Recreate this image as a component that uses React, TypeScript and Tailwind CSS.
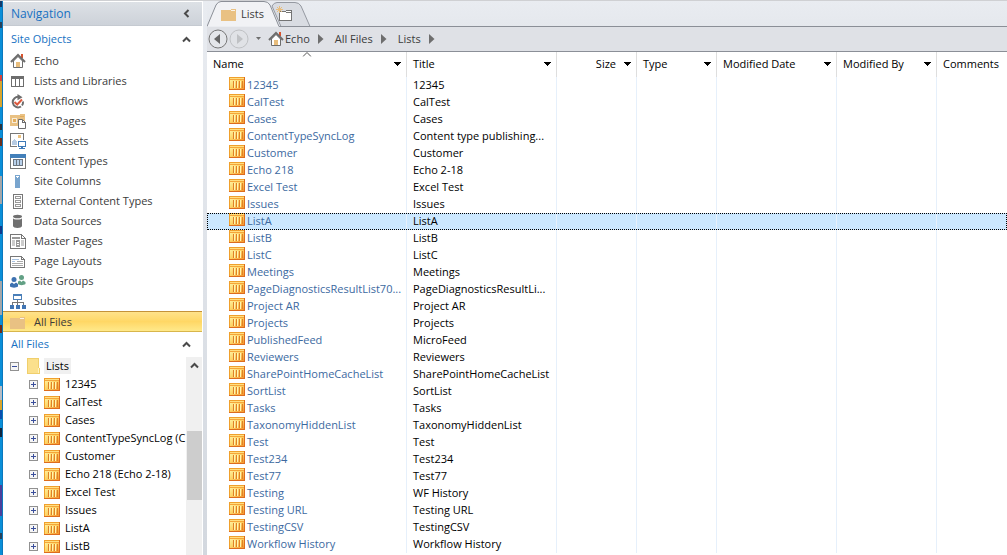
import { useState } from 'react';
import type { ReactNode } from 'react';

type FileRow = { name: string; title: string };

const files: FileRow[] = [
  { name: '12345', title: '12345' },
  { name: 'CalTest', title: 'CalTest' },
  { name: 'Cases', title: 'Cases' },
  { name: 'ContentTypeSyncLog', title: 'Content type publishing...' },
  { name: 'Customer', title: 'Customer' },
  { name: 'Echo 218', title: 'Echo 2-18' },
  { name: 'Excel Test', title: 'Excel Test' },
  { name: 'Issues', title: 'Issues' },
  { name: 'ListA', title: 'ListA' },
  { name: 'ListB', title: 'ListB' },
  { name: 'ListC', title: 'ListC' },
  { name: 'Meetings', title: 'Meetings' },
  { name: 'PageDiagnosticsResultList70...', title: 'PageDiagnosticsResultLi...' },
  { name: 'Project AR', title: 'Project AR' },
  { name: 'Projects', title: 'Projects' },
  { name: 'PublishedFeed', title: 'MicroFeed' },
  { name: 'Reviewers', title: 'Reviewers' },
  { name: 'SharePointHomeCacheList', title: 'SharePointHomeCacheList' },
  { name: 'SortList', title: 'SortList' },
  { name: 'Tasks', title: 'Tasks' },
  { name: 'TaxonomyHiddenList', title: 'TaxonomyHiddenList' },
  { name: 'Test', title: 'Test' },
  { name: 'Test234', title: 'Test234' },
  { name: 'Test77', title: 'Test77' },
  { name: 'Testing', title: 'WF History' },
  { name: 'Testing URL', title: 'Testing URL' },
  { name: 'TestingCSV', title: 'TestingCSV' },
  { name: 'Workflow History', title: 'Workflow History' },
];

const treeItems = [
  '12345',
  'CalTest',
  'Cases',
  'ContentTypeSyncLog (C',
  'Customer',
  'Echo 218 (Echo 2-18)',
  'Excel Test',
  'Issues',
  'ListA',
  'ListB',
];

const columns = [
  { label: 'Name', width: 'w-[200px]' },
  { label: 'Title', width: 'w-[150px]' },
  { label: 'Size', width: 'w-[80px]', right: true },
  { label: 'Type', width: 'w-[80px]' },
  { label: 'Modified Date', width: 'w-[120px]' },
  { label: 'Modified By', width: 'w-[100px]' },
  { label: 'Comments', width: '' },
];

function Icon({ children }: { children: ReactNode }) {
  return (
    <svg width="16" height="16" viewBox="0 0 16 16" className="shrink-0" shapeRendering="crispEdges" aria-hidden="true">
      {children}
    </svg>
  );
}

function HomeIcon() {
  return (
    <svg width="16" height="16" viewBox="0 0 16 16" className="shrink-0" aria-hidden="true">
      <path d="M11 1h2v4h-2z" fill="#d9532c" />
      <path d="M3.5 8v6.5h9V8L8 3.5z" fill="#fff" stroke="#6d6d6d" />
      <path d="M1 9l7-7 7 7" fill="none" stroke="#6d6d6d" strokeWidth="2" />
      <path d="M6 9h4v5H6z" fill="#e8bd7c" />
    </svg>
  );
}

function FolderIcon() {
  return (
    <Icon>
      <path d="M0 4h9l1-1h5v12H0z" fill="#e9c183" />
      <path d="M10 4h4v1h-4z" fill="#fff" opacity=".8" />
    </Icon>
  );
}

// orange list tile, shared by the tree and the table
function ListIcon() {
  return (
    <svg width="16" height="13" viewBox="0 0 16 13" className="shrink-0" shapeRendering="crispEdges" aria-hidden="true">
      <defs>
        <linearGradient id="tile" x1="0" y1="0" x2="1" y2="1">
          <stop offset="0" stopColor="#fff6a8" />
          <stop offset=".5" stopColor="#fdd264" />
          <stop offset="1" stopColor="#f5952c" />
        </linearGradient>
      </defs>
      <path d="M0 0h16v13H0z" fill="#f0a02c" />
      <path d="M15 0h1v13H0v-1h15z" fill="#dd6c1e" />
      <path d="M1 1h14v11H1z" fill="url(#tile)" />
      <path d="M1 1h14v1H1z" fill="#ffdf80" />
      <path d="M1 2h14v1H1z" fill="#f5a53a" />
      <path d="M4 4h1v7H4zM7 4h1v7H7zM10 4h1v7h-1zM13 4h1v7h-1z" fill="#df8228" />
      <path d="M5 4h1v7H5zM8 4h1v7H8zM11 4h1v7h-1z" fill="#fff4b0" />
    </svg>
  );
}

const navItems: { label: string; icon: ReactNode }[] = [
  { label: 'Echo', icon: <HomeIcon /> },
  {
    label: 'Lists and Libraries',
    icon: (
      <Icon>
        <path d="M1 3h13v11H1z" fill="#6d6d6d" />
        <path d="M2 6h3v7H2zM6 6h3v7H6zM10 6h3v7h-3z" fill="#fff" />
      </Icon>
    ),
  },
  {
    label: 'Workflows',
    icon: (
      <svg width="16" height="16" viewBox="0 0 16 16" className="shrink-0" aria-hidden="true">
        <path d="M11 13.5A5.3 5.3 0 1 1 9.5 4" fill="none" stroke="#6d6d6d" strokeWidth="2" />
        <path d="M13 8.5a5.5 5.5 0 0 1-1 4" fill="none" stroke="#6d6d6d" strokeWidth="2" />
        <path d="M7.5 1l5 3.2-5 3z" fill="#6d6d6d" />
        <path d="M4.5 9l2.7 2.5L12 6.5" fill="none" stroke="#dc5a3e" strokeWidth="2" />
      </svg>
    ),
  },
  {
    label: 'Site Pages',
    icon: (
      <Icon>
        <path d="M0 2h9l1-1h5v12H0z" fill="#e9c183" />
        <path d="M2 5h5v5H2z" fill="#fff" opacity=".7" />
        <path d="M3 6h3v3H3zM10 3h4v1h-4z" fill="#e3ad5c" />
        <path d="M8.5 6.5h4l3 3v6h-7z" fill="#fff" stroke="#6d6d6d" shapeRendering="auto" />
        <path d="M12.5 6.5v3h3" fill="none" stroke="#6d6d6d" />
      </Icon>
    ),
  },
  {
    label: 'Site Assets',
    icon: (
      <Icon>
        <path d="M.5 .5h13v13H.5z" fill="#fff" stroke="#777" />
        <path d="M2 12V8l2-2 3 3v3z" fill="#b6cbe3" />
        <path d="M8 2h3v3H8z" fill="#ecc27f" />
        <path d="M7 7h9v9H7z" fill="#fff" />
        <path d="M8.5 8.5h7v5h-7z" fill="#fff" stroke="#3e7ab8" />
        <path d="M11 14h2v1h-2zM9 15h6v1H9z" fill="#3e7ab8" />
      </Icon>
    ),
  },
  {
    label: 'Content Types',
    icon: (
      <Icon>
        <path d="M.5 1.5h15v14H.5z" fill="#fff" stroke="#777" />
        <path d="M0 1h16v4H0z" fill="#4380ba" />
        <path d="M3 6h10v7H3z" fill="#6d7681" />
        <path d="M4 7h2v5H4zM7 7h2v5H7zM10 7h2v5h-2z" fill="#b8d0ea" />
      </Icon>
    ),
  },
  {
    label: 'Site Columns',
    icon: (
      <Icon>
        <path d="M5 2h5v13H5z" fill="#79a5ce" />
        <path d="M6 3h3v1H6zM7 4h1v1H7z" fill="#fff" />
      </Icon>
    ),
  },
  {
    label: 'External Content Types',
    icon: (
      <Icon>
        <path d="M3.5 1.5h9v14h-9z" fill="#fff" stroke="#777" />
        <path d="M5.5 3.5h5v2h-5zM5.5 7.5h5v2h-5zM5.5 11.5h5v2h-5z" fill="#fff" stroke="#999" />
      </Icon>
    ),
  },
  {
    label: 'Data Sources',
    icon: (
      <svg width="16" height="16" viewBox="0 0 16 16" className="shrink-0" aria-hidden="true">
        <path d="M3 5v8c0 2.500 9 2.500 9 0V5c0 2-9 2-9 0z" fill="#707070" />
        <ellipse cx="7.5" cy="3.5" rx="4.5" ry="1.8" fill="#707070" />
      </svg>
    ),
  },
  {
    label: 'Master Pages',
    icon: (
      <Icon>
        <path d="M.5 1.5h11l4 4v10H.5z" fill="#fff" stroke="#777" />
        <path d="M11.5 1.5v4h4" fill="none" stroke="#777" />
        <path d="M2 4h8v2H2z" fill="#999" />
        <path d="M2 7h3v6H2zM11 7h3v6h-3z" fill="#ccc" />
        <path d="M6 7h4v7H6z" fill="#999" />
        <path d="M7 9h2v1H7zM7 11h2v1H7z" fill="#fff" />
      </Icon>
    ),
  },
  {
    label: 'Page Layouts',
    icon: (
      <Icon>
        <path d="M.5 3.5h11l3 3v8H.5z" fill="#fff" stroke="#777" />
        <path d="M11.5 3.5v3h3" fill="none" stroke="#777" />
        <path d="M2 6h7v1H2zM2 8h3v1H2z" fill="#a8c3e2" />
        <path d="M7 8h6v1H7zM2 10h11v1H2zM2 12h11v1H2z" fill="#aaa" />
      </Icon>
    ),
  },
  {
    label: 'Site Groups',
    icon: (
      <svg width="16" height="16" viewBox="0 0 16 16" className="shrink-0" aria-hidden="true">
        <circle cx="11.5" cy="4.5" r="2.5" fill="#62a085" />
        <path d="M8 8.5l2-1 1.5 1.5L13 7.5l2.5 1.5v2c-2 1.5-6 1.5-7.5 0z" fill="#62a085" />
        <circle cx="4" cy="6.5" r="2.5" fill="#3e72b0" />
        <path d="M0 11l2-1.5L4 11l2-1.5L8 11v2.5c-2 1.5-6 1.5-8 0z" fill="#3e72b0" />
      </svg>
    ),
  },
  {
    label: 'Subsites',
    icon: (
      <Icon>
        <path d="M3.5 1.5h8v5h-8z" fill="#fff" stroke="#4a7fb9" />
        <path d="M3 1h9v2H3z" fill="#4a7fb9" />
        <path d="M7.5 7v6M2.5 13V9.5h11V13" fill="none" stroke="#777" />
        <path d="M0 12h4v4H0zM6 12h4v4H6zM12 12h4v4h-4z" fill="#4175b3" />
      </Icon>
    ),
  },
  { label: 'All Files', icon: <FolderIcon /> },
];

function Chevron({ left }: { left?: boolean }) {
  return (
    <svg width="9" height="9" viewBox="0 0 9 9" aria-hidden="true">
      <path d={left ? 'M6.5 1L3 4.5 6.5 8' : 'M1 6.5L4.5 3 8 6.5'} fill="none" stroke="#4a4a4a" strokeWidth="2" />
    </svg>
  );
}

function SectionTitle({ children }: { children: ReactNode }) {
  return (
    <h2 className="flex h-6 items-center justify-between pr-[11px] pl-2 text-[#1771c2]">
      {children}
      <button type="button" aria-label="Collapse section">
        <Chevron />
      </button>
    </h2>
  );
}

function Expander({ open }: { open?: boolean }) {
  return (
    <button type="button" aria-label={open ? 'Collapse' : 'Expand'} className="shrink-0">
      <svg width="9" height="9" viewBox="0 0 9 9" shapeRendering="crispEdges" aria-hidden="true">
        <path d="M.5 .5h8v8h-8z" fill="#f6f6f6" stroke="#919191" />
        <path d={open ? 'M2 4h5v1H2z' : 'M2 4h5v1H2zM4 2h1v5H4z'} fill="#3a4f9c" />
      </svg>
    </button>
  );
}

// sliver of the desktop that shows beside the window
function DesktopEdge() {
  return (
    <div className="w-[3px] shrink-0 border-r border-[#0a78bd] bg-[#0a8fd8]">
      <div className="h-[6px] bg-[#123a6b]" />
      <div className="mt-[15px] h-[6px] bg-[#27415a]" />
      <div className="mt-[47px] h-[6px] bg-[#d8433a]" />
      <div className="h-[26px] bg-[#d9a52e]" />
      <div className="mt-[17px] h-[6px] bg-[#27343f]" />
      <div className="mt-[8px] h-[8px] bg-[#6b2f1c]" />
      <div className="mt-[30px] h-[28px] bg-[#a3a6a9]" />
      <div className="mt-[22px] h-[8px] bg-[#123a8b]" />
      <div className="mt-[47px] h-[34px] bg-[#a3a6a9]" />
      <div className="mt-[10px] h-[8px] bg-[#6b2f1c]" />
      <div className="mt-[53px] h-[14px] bg-[#b6bcc4]" />
      <div className="h-[10px] bg-[#d9a52e]" />
      <div className="h-[9px] bg-[#0c4fae]" />
      <div className="mt-[9px] h-[9px] bg-[#10263f]" />
      <div className="mt-[48px] h-[31px] bg-[#4b3f9b]" />
      <div className="mt-[17px] h-[6px] bg-[#27415a]" />
    </div>
  );
}

function Sidebar() {
  const [active, setActive] = useState('All Files');

  return (
    <aside className="flex w-[200px] shrink-0 flex-col border-r border-white bg-white">
      <header className="mt-px flex h-6 shrink-0 items-center justify-between border-b border-[#c5cad1] bg-linear-to-b from-[#dde1e6] to-[#cdd2d9] pr-[11px] pl-2 text-[#1771c2]">
        <h1 className="text-[12px]">Navigation</h1>
        <button type="button" aria-label="Collapse navigation">
          <Chevron left />
        </button>
      </header>

      <nav className="mt-px">
        <SectionTitle>Site Objects</SectionTitle>
        <ul>
          {navItems.map((item) => (
            <li key={item.label}>
              <button
                type="button"
                onClick={() => setActive(item.label)}
                className={
                  item.label === active
                    ? 'flex h-[21px] w-full items-center gap-2 border-y border-t-[#c4923a] border-b-[#d8b64c] bg-linear-to-b from-[#ffe28a] via-[#ffd765] to-[#ffe98a] pl-[7px] text-[#3b3b3b]'
                    : 'flex h-5 w-full items-center gap-2 pl-[7px] text-[#3b3b3b]'
                }
              >
                {item.icon}
                {item.label}
              </button>
            </li>
          ))}
        </ul>
      </nav>

      <section className="flex min-h-0 flex-1 flex-col">
        <SectionTitle>All Files</SectionTitle>
        <div className="mt-px flex min-h-0 flex-1">
          <ul className="min-w-0 flex-1 overflow-hidden whitespace-nowrap text-black">
            <li>
              <div className="flex h-[18px] items-center pl-[7px]">
                <Expander open />
                <svg width="13" height="16" viewBox="0 0 13 16" className="mr-1 ml-2 shrink-0" shapeRendering="crispEdges" aria-hidden="true">
                  <path d="M0 0h12v10h1v6H0z" fill="#f0cf6c" />
                  <path d="M1 1h10v14H1z" fill="#fbe08c" />
                  <path d="M11 10h1v5h-1z" fill="#fff3c0" />
                </svg>
                <span className="bg-[#f0f0f0] px-[2px]">Lists</span>
              </div>
              <ul>
                {treeItems.map((name) => (
                  <li key={name} className="flex h-[18px] items-center pl-[26px]">
                    <Expander />
                    <span className="mr-[5px] ml-[6px]">
                      <ListIcon />
                    </span>
                    {name}
                  </li>
                ))}
              </ul>
            </li>
          </ul>
          {/* scrollbar */}
          <div className="flex w-4 flex-col items-center bg-[#f0f0f0]">
            <span className="flex h-[74px] pt-1">
              <Chevron />
            </span>
            <div className="h-[69px] w-[15px] bg-[#cdcdcd]" />
          </div>
        </div>
      </section>
    </aside>
  );
}

function Tabs() {
  return (
    <div className="relative flex h-[26px] shrink-0 items-center bg-linear-to-b from-[#e9ecf1] to-[#e5e8ed]">
      <svg width="110" height="26" viewBox="0 0 110 26" className="absolute top-0 left-0" aria-hidden="true">
        <path d="M65 5q2-3.500 5-3.500h18q4 0 6 3.500l9 20.500H74z" fill="#d9dce2" stroke="#9599a1" />
        <path d="M0 25.500L9 4q2-3.500 5-3.500h43q4 0 6 3.500l9 21.500" fill="#f1f2f5" stroke="#8b8f97" />
      </svg>
      <div className="absolute inset-x-0 bottom-0 ml-[72px] h-px bg-[#8b8f97]" />
      <button type="button" className="relative ml-[14px] flex items-center gap-1 text-[#3b3b3b]">
        <FolderIcon />
        Lists
      </button>
      <button type="button" aria-label="New tab" className="relative ml-3">
        <svg width="17" height="17" viewBox="0 0 17 17" shapeRendering="crispEdges" aria-hidden="true">
          <path d="M3.500 5.500h6l1-1h5v10h-12z" fill="#fff" stroke="#747474" />
          <path d="M10 6h5" stroke="#747474" />
          <path d="M3.500 0v7M0 3.500h7M1 1l5 5M6 1L1 6" stroke="#e8bd7c" shapeRendering="auto" />
        </svg>
      </button>
    </div>
  );
}

function Crumb({ label }: { label: string }) {
  return (
    <span className="flex items-center">
      <a href="#" className="text-[#3b3b3b]">
        {label}
      </a>
      <svg width="6" height="10" viewBox="0 0 6 10" className="ml-2 shrink-0" aria-hidden="true">
        <path d="M0 0l5.500 5L0 10z" fill="#6e6e6e" />
      </svg>
    </span>
  );
}

function Breadcrumbs() {
  return (
    <nav className="flex h-[25px] shrink-0 items-center border-b border-[#8b8f97] bg-[#dfe1e6] pl-px">
      <button type="button" aria-label="Back">
        <svg width="20" height="20" viewBox="0 0 20 20" aria-hidden="true">
          <circle cx="10" cy="10" r="9" fill="#e4e6ea" stroke="#777" />
          <path d="M12 5v10l-6-5z" fill="#666" />
        </svg>
      </button>
      <button type="button" aria-label="Forward" className="ml-px">
        <svg width="20" height="20" viewBox="0 0 20 20" aria-hidden="true">
          <circle cx="10" cy="10" r="9" fill="#e0e2e6" stroke="#bfc1c4" />
          <path d="M8 5v10l6-5z" fill="#bfc1c4" />
        </svg>
      </button>
      <button type="button" aria-label="Recent locations" className="mx-[7px]">
        <svg width="5" height="4" viewBox="0 0 5 4" aria-hidden="true">
          <path d="M0 0h5L2.500 3z" fill="#6e6e6e" />
        </svg>
      </button>
      <HomeIcon />
      <div className="ml-px flex gap-[11px]">
        <Crumb label="Echo" />
        <Crumb label="All Files" />
        <Crumb label="Lists" />
      </div>
    </nav>
  );
}

function FileTable() {
  const [selected, setSelected] = useState('ListA');

  return (
    <div className="flex min-h-0 flex-1 flex-col bg-white">
      <table className="w-full table-fixed border-separate border-spacing-0 text-left">
        <thead>
          <tr className="h-[25px]">
            {columns.map((col, i) => (
              <th
                key={col.label}
                className={`${col.width} relative p-0 align-top font-normal text-black ${i < 6 ? 'border-r border-[#dedede]' : ''}`}
              >
                {i === 0 && (
                  <svg width="9" height="5" viewBox="0 0 9 5" className="absolute top-0 left-1/2 -translate-x-1/2" aria-hidden="true">
                    <path d="M.5 4.500l4-4 4 4" fill="none" stroke="#555" />
                  </svg>
                )}
                <button
                  type="button"
                  className={`flex h-6 w-full items-center pr-[5px] pl-[6px] ${col.right ? 'justify-end gap-2' : 'justify-between'}`}
                >
                  {col.label}
                  {i < 6 && (
                    <svg width="7" height="4" viewBox="0 0 7 4" shapeRendering="crispEdges" aria-hidden="true">
                      <path d="M0 0h7v1H6v1H5v1H4v1H3V3H2V2H1V1H0z" fill="#000" />
                    </svg>
                  )}
                </button>
              </th>
            ))}
          </tr>
        </thead>
        <tbody>
          {files.map((f) => (
            <tr
              key={f.name}
              onClick={() => setSelected(f.name)}
              className={
                f.name === selected
                  ? 'h-[17px] bg-[#cce8ff] align-top outline-1 -outline-offset-1 outline-dotted outline-black'
                  : 'h-[17px] align-top'
              }
            >
              <td className="border-r border-[#e6f0fb] p-0">
                <a href="#" className="flex h-4 items-start gap-[2px] pl-[22px] whitespace-nowrap text-[#3c699f]">
                  <ListIcon />
                  {f.name}
                </a>
              </td>
              <td className="overflow-hidden border-r border-[#e6f0fb] p-0 pl-[6px] whitespace-nowrap text-black">
                {f.title}
              </td>
              <td className="border-r border-[#e6f0fb] p-0" />
              <td className="border-r border-[#e6f0fb] p-0" />
              <td className="border-r border-[#e6f0fb] p-0" />
              <td className="border-r border-[#e6f0fb] p-0" />
              <td className="p-0" />
            </tr>
          ))}
        </tbody>
      </table>
    </div>
  );
}

export default function App() {
  return (
    <div className="flex h-screen overflow-hidden border-t border-[#cfd0d3] bg-white font-['Open_Sans','Noto_Sans',sans-serif] text-[11px] leading-4">
      <DesktopEdge />
      <Sidebar />
      <div className="w-1 shrink-0 bg-linear-to-b from-[#e9ecf1] to-[#d3d8df]" />
      <main className="flex min-w-0 flex-1 flex-col">
        <Tabs />
        <Breadcrumbs />
        <FileTable />
      </main>
    </div>
  );
}
